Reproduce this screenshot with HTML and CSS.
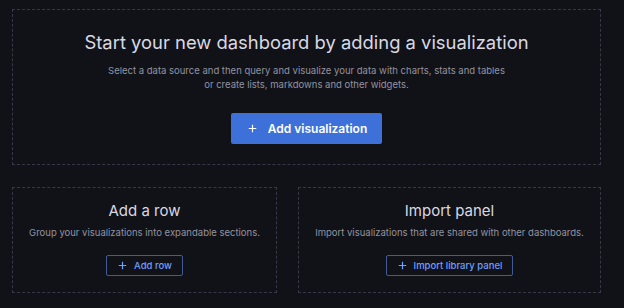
FILE: index.html
```html
<!DOCTYPE html>
<html lang="en">
<head>
    <meta charset="UTF-8">
    <meta name="viewport" content="width=device-width, initial-scale=1.0">
    <title>New dashboard</title>
    <link rel="stylesheet" href="styles.css">
</head>
<body>
    <main class="page">
        <section class="empty-main">
            <h1 class="main-title">Start your new dashboard by adding a visualization</h1>
            <p class="main-text">Select a data source and then query and visualize your data with charts, stats and tables<br>or create lists, markdowns and other widgets.</p>
            <button class="btn-primary" type="button">
                <svg class="plus" width="9" height="9" viewBox="0 0 12 12"><path d="M6 1v10M1 6h10" stroke="currentColor" stroke-width="1.6" fill="none"/></svg>
                Add visualization
            </button>
        </section>

        <div class="options">
            <section class="option">
                <h2 class="option-title">Add a row</h2>
                <p class="option-text">Group your visualizations into expandable sections.</p>
                <button class="btn-outline" type="button">
                    <svg class="plus" width="9" height="9" viewBox="0 0 12 12"><path d="M6 1v10M1 6h10" stroke="currentColor" stroke-width="1.6" fill="none"/></svg>
                    Add row
                </button>
            </section>

            <section class="option">
                <h2 class="option-title">Import panel</h2>
                <p class="option-text">Import visualizations that are shared with other dashboards.</p>
                <button class="btn-outline" type="button">
                    <svg class="plus" width="9" height="9" viewBox="0 0 12 12"><path d="M6 1v10M1 6h10" stroke="currentColor" stroke-width="1.6" fill="none"/></svg>
                    Import library panel
                </button>
            </section>
        </div>
    </main>
</body>
</html>
```

FILE: styles.css
```css
body {
    margin: 0;
    background-color: #111217;
    font-family: Inter, "Liberation Sans", sans-serif;
    color: #d4d4de;
}

.page {
    padding: 9px 23px 0 12px;
}

.empty-main {
    display: flex;
    flex-direction: column;
    align-items: center;
    height: 156px;
    box-sizing: border-box;
    padding-top: 20px;
    border: 1px dashed #363848;
}

.main-title {
    margin: 0;
    font-size: 18.4px;
    line-height: 24px;
    font-weight: 400;
    color: #d8d9e3;
}

.main-text {
    margin: 10px 0 0;
    font-size: 9.5px;
    line-height: 14px;
    text-align: center;
    color: #9293a1;
}

.btn-primary {
    display: flex;
    align-items: center;
    justify-content: center;
    gap: 11px;
    margin-top: 21px;
    width: 151px;
    height: 31px;
    padding: 0 0 0 2px;
    border: none;
    border-radius: 2px;
    background-color: #3d71d9;
    color: #ffffff;
    font-family: inherit;
    font-size: 12px;
    font-weight: 600;
    cursor: pointer;
}

.options {
    display: grid;
    grid-template-columns: 265px 1fr;
    gap: 21px;
    margin-top: 22px;
}

.option {
    display: flex;
    flex-direction: column;
    align-items: center;
    height: 106px;
    box-sizing: border-box;
    padding-top: 13px;
    border: 1px dashed #363848;
}

.option-title {
    margin: 0;
    font-size: 15px;
    line-height: 20px;
    font-weight: 400;
    color: #d8d9e3;
}

.option-text {
    margin: 5px 0 0;
    font-size: 9.5px;
    line-height: 14px;
    color: #9293a1;
}

.btn-outline {
    display: flex;
    align-items: center;
    gap: 7px;
    margin-top: 15px;
    height: 21px;
    padding: 0 10px 0 11px;
    border: 1px solid #3f5c98;
    border-radius: 2px;
    background-color: transparent;
    color: #6e9fff;
    font-family: inherit;
    font-size: 9.5px;
    font-weight: 500;
    cursor: pointer;
}
```
